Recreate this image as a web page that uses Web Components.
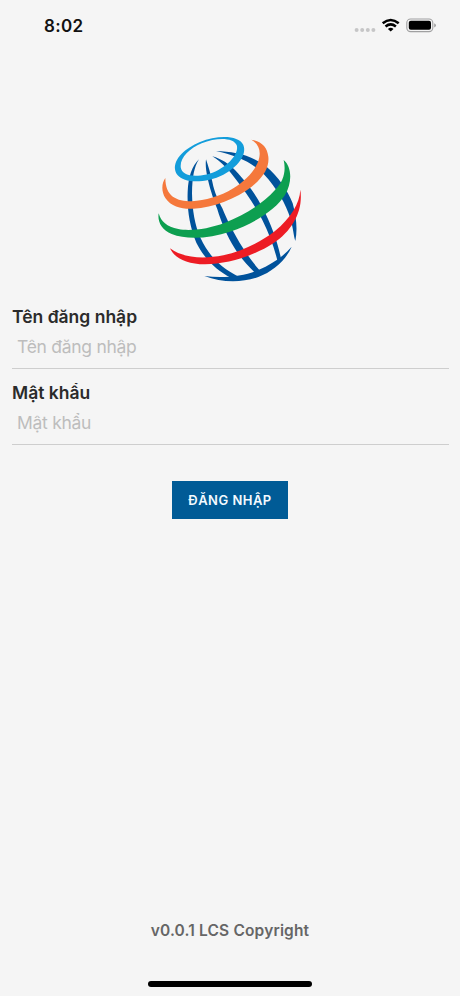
<!DOCTYPE html>
<html lang="vi"><head><meta charset="utf-8"><title>Đăng nhập</title>
<style>html,body{margin:0;height:100%;background:#f5f5f5}body{font-family:Inter,"Noto Sans",sans-serif}</style></head>
<body><login-screen></login-screen>
<script>
const define=(name,html)=>customElements.define(name,class extends HTMLElement{
  constructor(){super();const t=document.createElement('template');t.innerHTML=html;
  this.attachShadow({mode:'open'}).append(t.content.cloneNode(true));}
});
define('status-bar',`<style>
:host{display:flex;height:50px;align-items:center;justify-content:space-between;padding:0 24px 0 44px;box-sizing:border-box;color:#111}
time{font-size:17px;font-weight:600;line-height:20px;letter-spacing:.3px;margin-top:2px}
svg{display:block}</style>
<time>8:02</time>
<svg width="82" height="20" viewBox="0 0 82 20">
<g fill="#c6c6c7"><circle cx="2.6" cy="15" r="2"/><circle cx="8.2" cy="15" r="2"/><circle cx="13.8" cy="15" r="2"/><circle cx="19.4" cy="15" r="2"/></g>
<g fill="none" stroke="#000" stroke-width="2.5"><path d="M28.7 8.3Q36.7 1.6 44.7 8.3"/><path d="M31.5 11.5Q36.7 7.2 41.9 11.5"/></g><path d="M33.9 13.9Q36.7 11.8 39.5 13.9L36.7 16.6Z"/>
<rect x="52.8" y="4" width="26" height="12.6" rx="3.8" fill="none" stroke="#a0a0a1" stroke-width="1.1"/><rect x="54.8" y="5.8" width="22.2" height="9" rx="2"/><path d="M80.2 8.2Q82 9 82 10.3T80.2 12.4Z" fill="#a0a0a1"/>
</svg>`);
define('globe-logo',`<style>:host{display:block;width:160px;height:160px}svg{display:block}</style>
<svg width="160" height="160" viewBox="0 0 480 480">
<g fill="#00529b">
<path d="M147 88C132 112 127 140 126 190C127 240 134 285 152 325C175 375 210 412 266 440L244 444C203 423 165 390 139 338C119 290 111 240 113 185C115 140 126 108 147 88Z"/>
<path d="M168 88C175 108 181 130 187 155C194 190 204 208 217 235C230 268 252 312 279 354C294 378 310 400 330 422L315 428C292 406 271 382 254 355C231 318 213 275 202 238C188 200 178 170 172 140C168 120 166 104 168 88Z"/>
<path d="M187 79C215 87 237 102 255 120C292 160 315 190 336 230C364 283 383 335 393 386L382 391C372 350 357 310 337 270C315 226 287 187 259 150C238 122 215 96 187 79Z"/>
<path d="M198 64C250 64 300 74 347 108C387 142 412 180 428 220C439 260 443 298 436 333C431 320 430 295 421 265C408 222 380 174 343 134C308 98 255 74 198 64Z"/>
<path d="M163 438C220 446 280 439 325 420C365 403 400 380 425 350C408 390 370 424 325 441C275 459 215 458 163 438Z"/></g>
<path fill="#f5783c" d="M46 144C34 160 34 185 46 204C64 232 100 238 130 236C190 233 260 205 305 170C345 138 358 108 355 80C352 52 335 34 304 29C325 42 332 60 328 82C322 115 290 150 250 175C210 200 165 212 125 214C80 214 46 200 46 144Z"/>
<path fill="#0d9f50" d="M26 250C22 275 35 300 65 312C110 330 180 325 240 305C320 278 380 235 405 195C428 155 425 110 401 90C409 125 400 155 375 180C335 225 280 255 225 278C175 297 120 304 85 297C50 290 33 275 26 250Z"/>
<path fill="#ed1c24" d="M60 355C72 383 110 403 165 403C235 402 315 376 370 340C430 300 460 240 451 179C449 220 422 264 375 303C330 338 275 364 220 376C155 389 95 382 60 355Z"/>
<path fill="#139ddb" fill-rule="evenodd" d="M75 118C72 85 105 55 150 36C200 16 265 14 280 45C292 75 262 112 220 134C180 155 130 158 105 149C85 142 77 132 75 118ZM92 108C92 122 102 132 120 136C140 140 175 136 205 120C238 102 268 70 260 45C250 22 200 21 155 40C120 55 92 80 92 108Z"/>
</svg>`);
define('login-field',`<style>
:host{display:flex;flex-direction:column;box-sizing:border-box;height:76px;padding-top:12px;border-bottom:1px solid #cecece}
label{font-size:17.5px;font-weight:600;line-height:24px;color:#2b2b2b;white-space:nowrap}
div{padding:6px 0 0 5px;font-size:17.5px;line-height:24px;color:#bdbdbd;letter-spacing:-.28px;white-space:nowrap}
</style><label><slot name="label"></slot></label><div><slot></slot></div>`);
define('primary-button',`<style>
:host{display:flex;width:116px;height:38px;background:#005b96;color:#f4faff;align-items:center;justify-content:center;font-size:13px;font-weight:600;letter-spacing:.47px;white-space:nowrap}
</style><slot></slot>`);
define('app-footer',`<style>
:host{display:flex;flex-direction:column;align-items:center;color:#666;font-size:15.5px;font-weight:600;line-height:20px;letter-spacing:.16px}
i{width:164px;height:6px;border-radius:3px;background:#000;margin:40px 0 9px}
</style><span><slot></slot></span><i></i>`);
define('login-screen',`<style>
:host{display:flex;flex-direction:column;height:996px;background:#f5f5f5;overflow:hidden}
main{display:flex;flex-direction:column;padding:80px 11px 0 12px;flex:1}
globe-logo{align-self:center;margin-right:1px}
form{display:flex;flex-direction:column;margin-top:3px}
primary-button{align-self:center;margin:36px 1px 0 0}
</style><status-bar></status-bar><main><globe-logo></globe-logo>
<form><login-field><span slot="label">Tên đăng nhập</span>Tên đăng nhập</login-field>
<login-field><span slot="label">Mật khẩu</span>Mật khẩu</login-field>
<primary-button>ĐĂNG NHẬP</primary-button></form></main><app-footer>v0.0.1 LCS Copyright</app-footer>`);
</script></body></html>
